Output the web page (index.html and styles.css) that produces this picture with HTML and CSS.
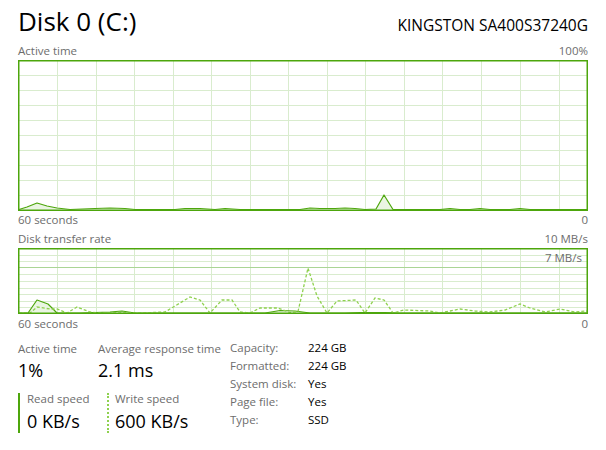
FILE: index.html
```html
<!DOCTYPE html>
<html>
<head>
<meta charset="utf-8">
<link rel="stylesheet" href="styles.css">
</head>
<body>
<div class="page">
  <div class="header">
    <h1 class="title">Disk 0 (C:)</h1>
    <div class="model">KINGSTON SA400S37240G</div>
  </div>

  <div class="axis axis-top"><span>Active time</span><span>100%</span></div>
  <div class="graph graph-active">
    <svg width="570" height="151" viewBox="18 60 570 151">
      <path class="grid" d="M57.5 61V210M96.5 61V210M134.5 61V210M173.5 61V210M211.5 61V210M250.5 61V210M288.5 61V210M327.5 61V210M365.5 61V210M404.5 61V210M442.5 61V210M481.5 61V210M520.5 61V210M559.5 61V210M19 75.5H587M19 90.5H587M19 105.5H587M19 120.5H587M19 135.5H587M19 150.5H587M19 165.5H587M19 180.5H587M19 195.5H587"/>
      <polygon class="fill" points="19,210 19,209.5 27,207 37,203 47,206 57,208 70,209.5 95,208.5 110,208 125,208.5 135,209.5 175,209.5 185,208.5 200,208.5 215,209.5 225,208.5 240,209.5 300,209.5 310,208 320,208.5 335,208.5 345,208 355,208.5 365,209.5 376,209 384,195 393,209.5 440,209.5 450,208.5 460,209.5 470,209.5 480,208.5 490,209.5 510,209.5 520,208.5 530,209.5 587,209.5 587,210"/>
      <polyline class="line" points="19,209.5 27,207 37,203 47,206 57,208 70,209.5 95,208.5 110,208 125,208.5 135,209.5 175,209.5 185,208.5 200,208.5 215,209.5 225,208.5 240,209.5 300,209.5 310,208 320,208.5 335,208.5 345,208 355,208.5 365,209.5 376,209 384,195 393,209.5 440,209.5 450,208.5 460,209.5 470,209.5 480,208.5 490,209.5 510,209.5 520,208.5 530,209.5 587,209.5"/>
      <rect class="frame" x="18.75" y="60.75" width="568.5" height="149.5"/>
    </svg>
  </div>
  <div class="axis axis-bottom"><span>60 seconds</span><span>0</span></div>

  <div class="axis axis-top axis-second"><span>Disk transfer rate</span><span>10 MB/s</span></div>
  <div class="graph graph-rate">
    <svg width="570" height="66" viewBox="18 248 570 66">
      <path class="grid" d="M57.5 249V313M96.5 249V313M134.5 249V313M173.5 249V313M211.5 249V313M250.5 249V313M288.5 249V313M327.5 249V313M365.5 249V313M404.5 249V313M442.5 249V313M481.5 249V313M520.5 249V313M559.5 249V313M19 255.5H587M19 261.5H587M19 274.5H587M19 281.5H587M19 288.5H587M19 294.5H587M19 301.5H587M19 307.5H587"/>
      <path class="scale-line" d="M19 267.5H587"/>
      <polygon class="fill" points="19,313.5 19,313 28,313 37,300 48,304 57,313 80,313 110,312 122,311 135,313 265,313 280,310.5 295,311 310,313 345,313 360,312.5 385,312.5 400,313 587,313 587,313.5"/>
      <polyline class="line" points="19,313 28,313 37,300 48,304 57,313 80,313 110,312 122,311 135,313 265,313 280,310.5 295,311 310,313 345,313 360,312.5 385,312.5 400,313 587,313"/>
      <polyline class="dash" points="19,313 30,313 37,307 50,309 57,309 67,313 77,307 90,312 100,313 140,313 165,312 190,297 200,300 210,313 222,300 232,300 240,312 250,313 260,308 278,308 290,312.5 298,311.5 308,268 317,296 327,313 337,301 356,300 365,313 375,298 384,300 393,313 404,310 430,311 440,313 450,311 460,309 475,311 490,312 505,310 520,304 530,308 545,312 560,309 575,312 587,311"/>
      <rect class="frame" x="18.75" y="248.75" width="568.5" height="64.5"/>
    </svg>
    <span class="scale-label">7 MB/s</span>
  </div>
  <div class="axis axis-bottom axis-bottom-second"><span>60 seconds</span><span>0</span></div>

  <div class="stats">
    <div class="left">
      <div class="row">
        <div class="stat stat-active">
          <div class="label">Active time</div>
          <div class="value">1%</div>
        </div>
        <div class="stat">
          <div class="label">Average response time</div>
          <div class="value">2.1 ms</div>
        </div>
      </div>
      <div class="row speeds">
        <div class="speed read">
          <div class="label">Read speed</div>
          <div class="value">0 KB/s</div>
        </div>
        <div class="speed write">
          <div class="label">Write speed</div>
          <div class="value">600 KB/s</div>
        </div>
      </div>
    </div>
    <div class="info">
      <span class="key">Capacity:</span><span class="val">224 GB</span>
      <span class="key">Formatted:</span><span class="val">224 GB</span>
      <span class="key">System disk:</span><span class="val">Yes</span>
      <span class="key">Page file:</span><span class="val">Yes</span>
      <span class="key">Type:</span><span class="val">SSD</span>
    </div>
  </div>
</div>
</body>
</html>
```

FILE: styles.css
```css
html, body {
  margin: 0;
  padding: 0;
  background: #ffffff;
}

body {
  font-family: "Open Sans", "Noto Sans", sans-serif;
  color: #000000;
}

.page {
  width: 570px;
  padding: 6px 18px 0 18px;
}

.header {
  display: flex;
  justify-content: space-between;
  align-items: baseline;
  height: 30px;
}

.title {
  margin: 0;
  font-size: 26px;
  line-height: 30px;
  font-weight: 400;
  color: #000000;
}

.model {
  font-size: 15.5px;
  line-height: 30px;
  color: #000000;
}

.axis {
  display: flex;
  justify-content: space-between;
  height: 15px;
  font-size: 11.5px;
  line-height: 15px;
  color: #6d6d6d;
}

.axis-top {
  margin-top: 7px;
}

.axis-second {
  margin-top: 4px;
}

.axis-bottom {
  margin-top: 1px;
}

.axis-bottom-second {
  margin-top: 2px;
}

.graph {
  position: relative;
  margin-top: 2px;
}

.graph svg {
  display: block;
}

.graph-active {
  height: 151px;
}

.graph-rate {
  height: 66px;
}

.grid {
  stroke: #d9ecce;
  stroke-width: 1;
  fill: none;
}

.scale-line {
  stroke: #aad595;
  stroke-width: 1;
  fill: none;
}

.fill {
  fill: #eaf5e2;
  stroke: none;
}

.line {
  fill: none;
  stroke: #4da60c;
  stroke-width: 1.2;
  stroke-linejoin: round;
}

.dash {
  fill: none;
  stroke: #8fd14f;
  stroke-width: 1.3;
  stroke-dasharray: 3 2;
}

.frame {
  fill: none;
  stroke: #4da60c;
  stroke-width: 1.5;
}

.scale-label {
  position: absolute;
  right: 6px;
  top: 2px;
  font-size: 11.5px;
  line-height: 15px;
  color: #6d6d6d;
}

.stats {
  display: flex;
  margin-top: 8px;
}

.left {
  width: 212px;
  padding-top: 2px;
}

.row {
  display: flex;
}

.stat-active {
  width: 80px;
}

.label {
  font-size: 11.5px;
  line-height: 15px;
  color: #6d6d6d;
  white-space: nowrap;
}

.value {
  margin-top: 2px;
  font-size: 18px;
  line-height: 24px;
  color: #000000;
  white-space: nowrap;
}

.speeds {
  margin-top: 11px;
}

.speed {
  width: 80px;
  padding-left: 7px;
  border-left: 2px solid #4da60c;
}

.speed.write {
  padding-left: 6px;
  border-left: 2px dotted #8fd14f;
}

.speed .label {
  line-height: 12px;
}

.speed .value {
  margin-top: 4px;
}

.info {
  display: grid;
  grid-template-columns: 78px auto;
  grid-auto-rows: 18px;
  font-size: 11.5px;
  line-height: 18px;
}

.key {
  color: #6d6d6d;
  white-space: nowrap;
}

.val {
  color: #000000;
  white-space: nowrap;
}
```
